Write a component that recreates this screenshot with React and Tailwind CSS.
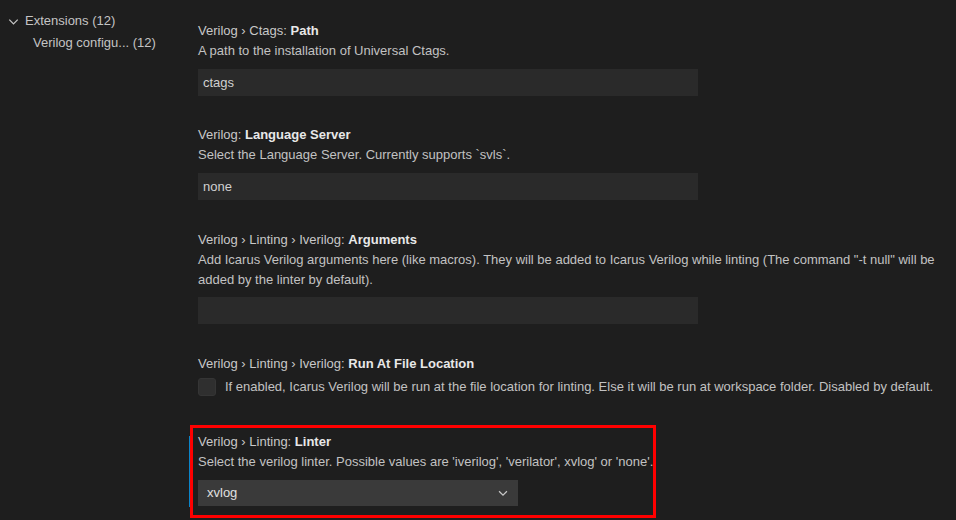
import React from "react";

const font = { fontFamily: '"Liberation Sans", Arial, sans-serif' };

function Chevron({ className }) {
  return (
    <svg viewBox="0 0 16 16" className={className} fill="none" stroke="currentColor" strokeWidth="1.4">
      <path d="M3.5 6l4.5 4.5L12.5 6" />
    </svg>
  );
}

function Title({ path, name }) {
  return (
    <div className="h-5 leading-5 text-[13px] text-[#c8c8c8]">
      {path}
      <span className="font-bold text-[#e8e8e8]">{name}</span>
    </div>
  );
}

function Desc({ children }) {
  return <div className="leading-5 text-[13px] text-[#c2c2c2]">{children}</div>;
}

function TextInput({ value }) {
  return (
    <div className="mt-2 h-[27px] w-[500px] bg-[#2a2a2a] px-[5px] flex items-center text-[13px] text-[#d0d0d0]">
      {value}
    </div>
  );
}

export default function App() {
  return (
    <div className="w-[956px] h-[520px] bg-[#1e1e1e] flex overflow-hidden" style={font}>
      {/* TOC */}
      <aside className="w-[198px] shrink-0 pt-[11px] text-[13px] text-[#c4c4c4]">
        <div className="flex items-center h-5 pl-[6px]">
          <Chevron className="w-[15px] h-[15px] text-[#c4c4c4]" />
          <span className="ml-[4px]">Extensions (12)</span>
        </div>
        <div className="h-5 mt-[2px] pl-[33px] leading-5 whitespace-nowrap">Verilog configu... (12)</div>
      </aside>

      {/* SETTINGS */}
      <main className="flex-1 pt-[21px]">
        <section>
          <Title path="Verilog › Ctags: " name="Path" />
          <Desc>A path to the installation of Universal Ctags.</Desc>
          <TextInput value="ctags" />
        </section>

        <section className="mt-[29px]">
          <Title path="Verilog: " name="Language Server" />
          <Desc>Select the Language Server. Currently supports `svls`.</Desc>
          <TextInput value="none" />
        </section>

        <section className="mt-[30px]">
          <Title path="Verilog › Linting › Iverilog: " name="Arguments" />
          <Desc>
            Add Icarus Verilog arguments here (like macros). They will be added to Icarus Verilog while linting (The command "-t null" will be
            <br />
            added by the linter by default).
          </Desc>
          <div className="mt-[7px] h-[27px] w-[500px] bg-[#2a2a2a]" />
        </section>

        <section className="mt-[30px]">
          <Title path="Verilog › Linting › Iverilog: " name="Run At File Location" />
          <div className="flex items-center mt-[3px]">
            <div className="w-[18px] h-[18px] rounded-[3px] bg-[#2f2f2f] border border-[#353535]" />
            <span className="ml-[9px] text-[13px] text-[#c2c2c2] whitespace-nowrap">
              If enabled, Icarus Verilog will be run at the file location for linting. Else it will be run at workspace folder. Disabled by default.
            </span>
          </div>
        </section>

        <section className="relative mt-[35px]">
          {/* focus bar */}
          <div className="absolute left-[-9px] top-[4px] w-[2px] h-[71px] bg-[#0a84c8]" />
          {/* red annotation box */}
          <div className="absolute left-[-8px] top-[-7px] w-[466px] h-[93px] border-[3px] border-[#ff0000]" />
          <Title path="Verilog › Linting: " name="Linter" />
          <Desc>Select the verilog linter. Possible values are 'iverilog', 'verilator', xvlog' or 'none'.</Desc>
          <div className="mt-[8px] h-[26px] w-[320px] bg-[#3a3a3a] pl-[9px] pr-[8px] flex items-center justify-between text-[13px] text-[#e0e0e0]">
            <span>xvlog</span>
            <Chevron className="w-[14px] h-[14px] text-[#c8c8c8]" />
          </div>
        </section>
      </main>
    </div>
  );
}
